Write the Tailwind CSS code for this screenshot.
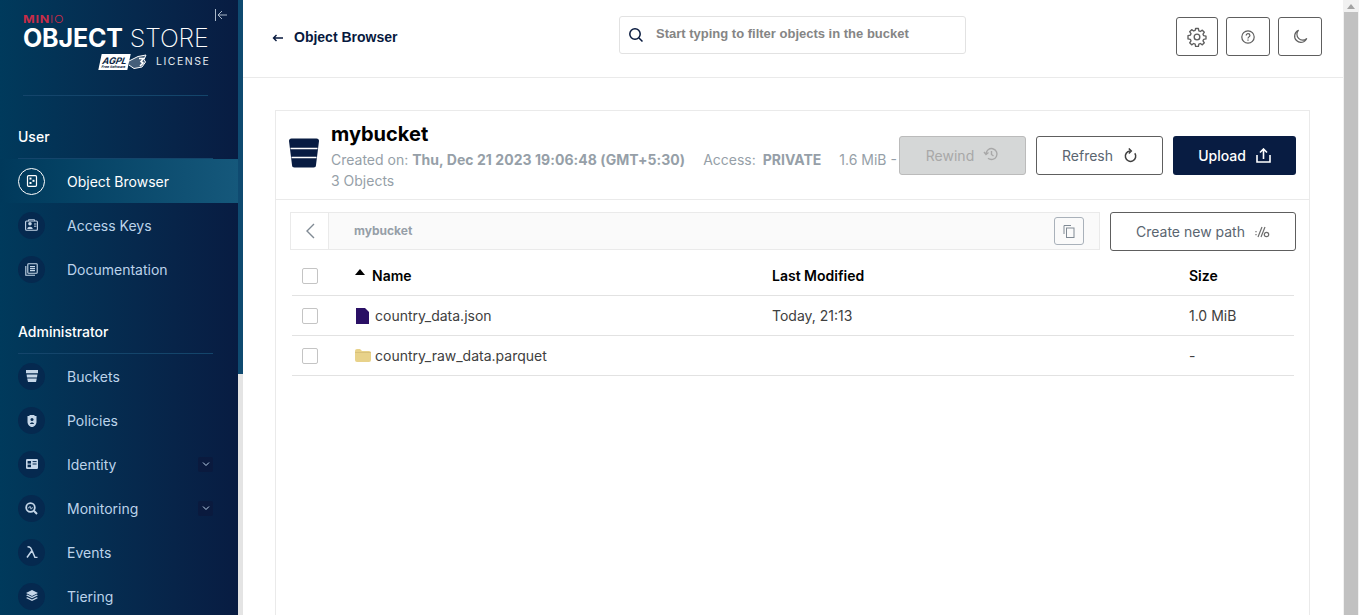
<!DOCTYPE html>
<html lang="en">
<head>
  <meta charset="UTF-8" />
  <meta name="viewport" content="width=device-width, initial-scale=1" />
  <title>MinIO Object Store</title>
  <script src="https://cdn.jsdelivr.net/npm/@tailwindcss/browser@4"></script>
</head>
<body class="font-['Inter',sans-serif] bg-white overflow-hidden">
  <div class="flex h-[615px] w-[1359px] overflow-hidden">

    <!-- Sidebar -->
    <aside class="w-[238px] h-full shrink-0 bg-gradient-to-r from-[#003a5c] to-[#081c42] text-white overflow-hidden">
      <div class="relative h-[96px] pt-[14px] pl-[23px]">
        <div class="text-[#c72c48] text-[10px] leading-[10px] tracking-[0.6px] scale-x-125 origin-left"><span class="font-bold">MIN</span><span class="font-light">IO</span></div>
        <div class="text-[25px] leading-[28px] tracking-[-0.15px] whitespace-nowrap"><span class="font-bold">OBJECT</span> <span class="font-extralight">STORE</span></div>
        <div class="flex items-center mt-[2px] ml-[77px] gap-[9px]">
          <div class="flex items-center w-[47px] h-[16px]">
            <div class="flex flex-col items-center justify-center w-[29px] h-[16px] bg-white -skew-x-12">
              <span class="text-[#0a1f44] italic font-bold text-[9px] leading-[9px]">AGPL</span>
              <span class="text-[#0a1f44] font-bold text-[3.5px] leading-[4px]">Free Software</span>
            </div>
            <svg class="w-[18px] h-[16px]" viewBox="0 0 18 16" fill="none" stroke="#fff"><path d="M0 7L9 2.500 17 1 15 5.500 16.500 8 13 13 5 14.500 0 11" fill="#fff" fill-opacity="0.250"/><path d="M10 4.500h4.500L12 7.500l2 1.500-3 3" stroke-width="1.600"/></svg>
          </div>
          <span class="text-[10.5px] tracking-[1.5px] leading-none text-[#e4eaf0]">LICENSE</span>
        </div>
        <svg class="absolute left-[214px] top-[8px] w-[14px] h-[14px]" viewBox="0 0 14 14" fill="none" stroke="#a9b8c8" stroke-width="1"><path d="M1.500 1v12M13 7H4M8 3L4 7l4 4"/></svg>
        <div class="absolute left-[23px] top-[95px] w-[185px] h-px bg-[#14456b]"></div>
      </div>

      <div class="h-[63px] flex flex-col justify-end">
        <div class="ml-[18px] mr-[25px] h-[32px] text-[14px] leading-[20px] border-b border-[#14456b] text-white font-medium">User</div>
      </div>
      <nav class="text-[14px] text-[#bcd3ea]">
        <a class="flex items-center h-[44px] pl-[18px] text-white bg-gradient-to-r from-[#00395b] to-[#15587b]">
          <span class="flex items-center justify-center w-[27px] h-[27px] rounded-full border border-white">
            <svg class="w-[12px] h-[12px]" viewBox="0 0 12 12" fill="none"><rect x="1.500" y="0.700" width="9" height="10.600" rx="1" stroke="#fff" stroke-width="1.200"/><rect x="3.500" y="2.600" width="2" height="2" fill="#fff"/><rect x="6.500" y="4.800" width="2" height="2" fill="#fff"/><rect x="3.500" y="7" width="2" height="2" fill="#fff"/></svg>
          </span>
          <span class="ml-[22px]">Object Browser</span>
        </a>
        <a class="flex items-center h-[44px] pl-[18px]">
          <span class="flex items-center justify-center w-[27px] h-[27px] rounded-full bg-[#05294f]">
            <svg class="w-[13px] h-[12px]" viewBox="0 0 13 12" fill="none"><rect x="0.600" y="2" width="11.800" height="9.200" rx="1" stroke="#c5d6e8" stroke-width="1.100"/><path d="M3.500 2.200V.6h6v1.600" stroke="#c5d6e8" stroke-width="0.800"/><circle cx="5" cy="4.800" r="1.800" fill="#c5d6e8"/><path d="M2.300 10c0-3 5.400-3 5.400 0z" fill="#c5d6e8"/><path d="M9 5h2.400M9 7.200h2.400" stroke="#c5d6e8"/></svg>
          </span>
          <span class="ml-[22px]">Access Keys</span>
        </a>
        <a class="flex items-center h-[44px] pl-[18px]">
          <span class="flex items-center justify-center w-[27px] h-[27px] rounded-full bg-[#05294f]">
            <svg class="w-[13px] h-[13px]" viewBox="0 0 13 13" fill="none" stroke="#c5d6e8" stroke-width="1.100"><rect x="2.800" y="0.800" width="9.400" height="9.400" rx="0.800"/><path d="M0.800 3v9.200H10M5 3.600h5M5 5.600h5M5 7.600h5"/></svg>
          </span>
          <span class="ml-[22px]">Documentation</span>
        </a>
      </nav>

      <div class="h-[32px] flex flex-col justify-end mt-[31px]">
        <div class="ml-[18px] mr-[25px] h-[32px] text-[14px] leading-[20px] border-b border-[#14456b] text-white font-medium">Administrator</div>
      </div>
      <nav class="text-[14px] text-[#bcd3ea]">
        <a class="flex items-center h-[44px] pl-[18px]">
          <span class="flex items-center justify-center w-[27px] h-[27px] rounded-full bg-[#05294f]">
            <svg class="w-[12px] h-[12px]" viewBox="0 0 12 12"><path d="M0 0h12v3.200H0zM.6 4.400h10.800L11 7.400H1zM1.200 8.600h9.600L10 12H2z" fill="#c5d6e8"/></svg>
          </span>
          <span class="ml-[22px]">Buckets</span>
        </a>
        <a class="flex items-center h-[44px] pl-[18px]">
          <span class="flex items-center justify-center w-[27px] h-[27px] rounded-full bg-[#05294f]">
            <svg class="w-[10px] h-[13px]" viewBox="0 0 10 13"><path d="M2.500 2V1h5v1H9.500v6c0 3-3 5-4.500 5S.5 11 .5 8V2z" fill="#c5d6e8"/><circle cx="5" cy="5.500" r="1.500" fill="#05294f"/><path d="M3 10c0-2 4-2 4 0z" fill="#05294f"/></svg>
          </span>
          <span class="ml-[22px]">Policies</span>
        </a>
        <a class="flex items-center h-[44px] pl-[18px]">
          <span class="flex items-center justify-center w-[27px] h-[27px] rounded-full bg-[#05294f]">
            <svg class="w-[12px] h-[10px]" viewBox="0 0 12 10"><rect width="12" height="10" rx="1.200" fill="#c5d6e8"/><rect x="1.600" y="2" width="3.400" height="2.600" fill="#05294f"/><rect x="1.600" y="5.600" width="3.400" height="2.600" fill="#05294f"/><path d="M6.600 2.600h4M6.600 5h4" stroke="#05294f"/></svg>
          </span>
          <span class="ml-[22px]">Identity</span>
          <span class="flex items-center justify-center w-[15px] h-[15px] ml-auto mr-[25px] rounded-[2px] bg-[#0a1a3e]">
            <svg class="w-[8px] h-[8px]" viewBox="0 0 8 8" fill="none" stroke="#bcd3ea"><path d="M1 2.500l3 3 3-3"/></svg>
          </span>
        </a>
        <a class="flex items-center h-[44px] pl-[18px]">
          <span class="flex items-center justify-center w-[27px] h-[27px] rounded-full bg-[#05294f]">
            <svg class="w-[13px] h-[13px]" viewBox="0 0 13 13" fill="none" stroke="#c5d6e8"><circle cx="5.500" cy="5.500" r="4.300" stroke-width="1.800"/><path d="M8.800 8.800L12 12" stroke-width="2"/><path d="M3 5.800h1.200l.8-1.600 1 3 .7-1.400H8" stroke-width="0.800"/></svg>
          </span>
          <span class="ml-[22px]">Monitoring</span>
          <span class="flex items-center justify-center w-[15px] h-[15px] ml-auto mr-[25px] rounded-[2px] bg-[#0a1a3e]">
            <svg class="w-[8px] h-[8px]" viewBox="0 0 8 8" fill="none" stroke="#bcd3ea"><path d="M1 2.500l3 3 3-3"/></svg>
          </span>
        </a>
        <a class="flex items-center h-[44px] pl-[18px]">
          <span class="flex items-center justify-center w-[27px] h-[27px] rounded-full bg-[#05294f]">
            <svg class="w-[12px] h-[12px]" viewBox="0 0 12 12" fill="none" stroke="#c5d6e8" stroke-width="1.500"><path d="M1.500 0.800C4.500 0.800 5 2 6 4.500L9 11.500H11.500M6 4.500L1 11.500"/></svg>
          </span>
          <span class="ml-[22px]">Events</span>
        </a>
        <a class="flex items-center h-[44px] pl-[18px]">
          <span class="flex items-center justify-center w-[27px] h-[27px] rounded-full bg-[#05294f]">
            <svg class="w-[12px] h-[12px]" viewBox="0 0 12 12" fill="#c5d6e8"><path d="M6 0l6 3-6 3-6-3z"/><path d="M0 5.200l1.400-.7L6 6.800l4.600-2.300 1.400.7-6 3z"/><path d="M0 8l1.400-.7L6 9.600l4.600-2.300 1.400.7-6 3z"/></svg>
          </span>
          <span class="ml-[22px]">Tiering</span>
        </a>
      </nav>
    </aside>

    <!-- Sidebar scrollbar strip -->
    <div class="w-[5px] h-full shrink-0 bg-[#e4e4e4]">
      <div class="h-[374px] bg-[#0f4a70]"></div>
    </div>

    <!-- Main -->
    <main class="w-[1100px] shrink-0 h-full">
      <header class="flex items-center h-[78px] border-b border-[#eaeaea] relative">
        <div class="flex items-center w-[376px] pl-[29px] pb-[2px]">
          <svg class="w-[11px] h-[8px]" viewBox="0 0 11 8" fill="none" stroke="#07193e" stroke-width="1.400"><path d="M11 4H1.500M4.500 1L1.500 4l3 3"/></svg>
          <span class="ml-[11px] text-[14px] font-bold text-[#07193e] font-['Liberation_Sans',sans-serif]">Object Browser</span>
        </div>
        <div class="flex items-center w-[347px] h-[38px] mb-[8px] border border-[#e2e2e2] rounded-[3px] pl-[8px]">
          <svg class="w-[16px] h-[16px]" viewBox="0 0 16 16" fill="none" stroke="#07193e" stroke-width="1.500"><circle cx="7" cy="7" r="5.200"/><path d="M11 11l3.500 3.500"/></svg>
          <span class="ml-[12px] mb-[1px] text-[13px] font-bold text-[#858585] font-['Liberation_Sans',sans-serif] whitespace-nowrap">Start typing to filter objects in the bucket</span>
        </div>
        <div class="flex items-center ml-auto mr-[21px] gap-[8px] pb-[4px]">
          <button class="flex items-center justify-center w-[42px] h-[39px] border border-[#5e5e5e] rounded-[3px]">
            <svg class="w-[20px] h-[20px]" viewBox="0 0 24 24" fill="none" stroke="#5e5e5e" stroke-width="1.600" stroke-linejoin="round"><path d="M10.300 2.500h3.400l.5 2.800 1.800.8 2.400-1.600 2.400 2.400-1.600 2.400.8 1.800 2.800.5v3.400l-2.800.5-.8 1.800 1.600 2.400-2.400 2.400-2.400-1.600-1.800.8-.5 2.800h-3.400l-.5-2.800-1.800-.8-2.400 1.600-2.400-2.400 1.600-2.400-.8-1.800-2.800-.5V11l2.800-.5.8-1.800-1.600-2.400 2.400-2.400 2.400 1.600 1.800-.8z" transform="translate(0 -0.700)"/><circle cx="12" cy="12" r="3.400"/></svg>
          </button>
          <button class="flex items-center justify-center w-[44px] h-[39px] border border-[#5e5e5e] rounded-[3px]">
            <svg class="w-[14px] h-[14px]" viewBox="0 0 14 14" fill="none" stroke="#5e5e5e" stroke-width="1.200"><circle cx="7" cy="7" r="6.200"/><path d="M5.200 5.400c0-2.300 3.700-2.300 3.700 0 0 1.400-1.900 1.500-1.900 3"/><path d="M7 9.600v1.200"/></svg>
          </button>
          <button class="flex items-center justify-center w-[44px] h-[39px] border border-[#5e5e5e] rounded-[3px]">
            <svg class="w-[15px] h-[15px]" viewBox="0 0 15 15" fill="none" stroke="#5e5e5e" stroke-width="1.200"><path d="M5.600 1.200A6.300 6.300 0 1 0 13.800 9.400 5.300 5.300 0 0 1 5.600 1.200z"/></svg>
          </button>
        </div>
      </header>

      <section class="mt-[32px] ml-[32px] w-[1035px] h-[600px] border border-[#eaeaea]">
        <!-- Bucket header -->
        <div class="flex h-[89px] border-b border-[#eaeaea] pl-[13px] pr-[13px]">
          <svg class="w-[30px] h-[30px] mt-[27px] shrink-0" viewBox="0 0 30 30"><path d="M0 3a2.500 2.500 0 0 1 2.500-2.500h25A2.500 2.500 0 0 1 30 3l-3 24a2.500 2.500 0 0 1-2.500 2.500h-19A2.500 2.500 0 0 1 3 27z" fill="#081c42"/><path d="M1.500 10.500h27M2.500 19.500h25" stroke="#fff" stroke-width="1.500"/></svg>
          <div class="ml-[12px] w-[568px] shrink-0 overflow-hidden whitespace-nowrap">
            <div class="text-[20px] leading-[24px] mt-[11px] font-bold text-black">mybucket</div>
            <div class="text-[14px] leading-[21px] mt-[3px] text-[#969fa8]">Created on: <b class="font-bold tracking-[0.05px]">Thu, Dec 21 2023 19:06:48 (GMT+5:30)</b><span class="ml-[18px]">Access:</span> <b class="font-bold ml-[3px]">PRIVATE</b><span class="ml-[18px]">1.6 MiB -</span></div>
            <div class="text-[14px] leading-[21px] text-[#969fa8]">3 Objects</div>
          </div>
          <button class="flex items-center justify-center gap-[9px] w-[127px] h-[39px] mt-[25px] bg-[#d5d7d7] border border-[#bbbbbb] rounded-[3px] text-[14px] text-[#a8a8a8]">
            Rewind
            <svg class="w-[16px] h-[16px] mb-[3px]" viewBox="0 0 16 16" fill="none" stroke="#a8a8a8" stroke-width="1.400"><path d="M3 8a5.500 5.500 0 1 1 2 4.300M1 6l2 2.500L5.500 6.500M8.500 5v3.500l2 1.500"/></svg>
          </button>
          <button class="flex items-center justify-center gap-[10px] w-[127px] h-[39px] mt-[25px] ml-[10px] border border-[#5e5e5e] rounded-[3px] text-[14px] text-[#5a6570]">
            Refresh
            <svg class="w-[14px] h-[15px]" viewBox="0 0 14 15" fill="none" stroke="#404040" stroke-width="1.500"><path d="M11.800 5.200A5.200 5.200 0 1 1 7 3"/><path d="M5.800 .5L8.300 3 5.800 5.500"/></svg>
          </button>
          <button class="flex items-center justify-center gap-[10px] w-[123px] h-[39px] mt-[25px] ml-[10px] bg-[#081c42] rounded-[3px] text-[14px] text-white font-medium">
            Upload
            <svg class="w-[15px] h-[15px]" viewBox="0 0 15 15" fill="none" stroke="#fff" stroke-width="1.600"><path d="M7.500 11V1.500M4 4.500l3.500-3.500L11 4.500"/><path d="M1 7v7h13V7"/></svg>
          </button>
        </div>

        <!-- Breadcrumb row -->
        <div class="flex mt-[12px] ml-[14px] mr-[13px] gap-[10px]">
          <div class="flex items-center w-[810px] h-[38px] bg-[#fafafa] border border-[#eaeaea]">
            <div class="flex items-center justify-center w-[38px] h-full bg-white border-r border-[#eaeaea]">
              <svg class="w-[10px] h-[16px]" viewBox="0 0 10 16" fill="none" stroke="#808a94" stroke-width="1.400"><path d="M9 1L2 8l7 7"/></svg>
            </div>
            <span class="ml-[25px] text-[12px] font-bold text-[#969fa8]">mybucket</span>
            <div class="flex items-center justify-center w-[30px] h-[28px] ml-auto mr-[15px] border border-[#a9b1ba] rounded-[3px]">
              <svg class="w-[12px] h-[14px]" viewBox="0 0 12 14" fill="none" stroke="#808a94"><path d="M1 10V1.500h7"/><rect x="3.500" y="4" width="7.500" height="9.500"/></svg>
            </div>
          </div>
          <button class="flex items-center justify-center gap-[10px] w-[186px] h-[39px] border border-[#5e5e5e] rounded-[3px] text-[14px] text-[#5a6570]">
            Create new path
            <svg class="w-[15px] h-[12px]" viewBox="0 0 15 12" fill="none" stroke="#6e6e6e" stroke-width="1.200"><path d="M1 5v1.200M1 8v1.200M3 11L7 1M6 11L10 1"/><circle cx="11.500" cy="8.500" r="2.200"/></svg>
          </button>
        </div>

        <!-- Object table -->
        <div class="ml-[16px] w-[1002px] mt-[5px] text-[14px]">
          <div class="flex items-center h-[40px] border-b border-[#e2e2e2] font-semibold text-black">
            <span class="w-[16px] h-[16px] ml-[10px] border border-[#c4c4c4] rounded-[2px] bg-white"></span>
            <svg class="w-[10px] h-[6px] mb-[7px] ml-[37px] mr-[7px]" viewBox="0 0 10 6"><path d="M0 6l5-6 5 6z" fill="#000"/></svg>
            <span class="w-[400px]">Name</span>
            <span class="w-[417px]">Last Modified</span>
            <span>Size</span>
          </div>
          <div class="flex items-center h-[40px] border-b border-[#e2e2e2] text-[#404040]">
            <span class="w-[16px] h-[16px] ml-[10px] border border-[#c4c4c4] rounded-[2px] bg-white"></span>
            <svg class="w-[13px] h-[16px] ml-[38px] mr-[6px]" viewBox="0 0 13 16"><path d="M0 0h9l4 4v12H0z" fill="#2a1065"/></svg>
            <span class="w-[397px]">country_data.json</span>
            <span class="w-[417px]">Today, 21:13</span>
            <span>1.0 MiB</span>
          </div>
          <div class="flex items-center h-[40px] border-b border-[#e2e2e2] text-[#404040]">
            <span class="w-[16px] h-[16px] ml-[10px] border border-[#c4c4c4] rounded-[2px] bg-white"></span>
            <svg class="w-[16px] h-[13px] ml-[37px] mr-[4px]" viewBox="0 0 16 13"><path d="M0 2a2 2 0 0 1 2-2h3l2 2h7a2 2 0 0 1 2 2v7a2 2 0 0 1-2 2H2a2 2 0 0 1-2-2z" fill="#e8d28a"/><path d="M0 3.500h16" stroke="#cdb670" stroke-width="0.600"/></svg>
            <span class="w-[397px]">country_raw_data.parquet</span>
            <span class="w-[417px]"></span>
            <span>-</span>
          </div>
        </div>
      </section>
    </main>

    <!-- Page scrollbar -->
    <div class="w-[16px] h-full shrink-0 bg-[#f1f1f1]">
      <div class="flex items-center justify-center h-[12px]">
        <svg class="w-[8px] h-[5px]" viewBox="0 0 8 5"><path d="M0 5l4-5 4 5z" fill="#a3a3a3"/></svg>
      </div>
      <div class="w-[14px] ml-px h-[603px] bg-[#c1c1c1]"></div>
    </div>
  </div>
</body>
</html>
